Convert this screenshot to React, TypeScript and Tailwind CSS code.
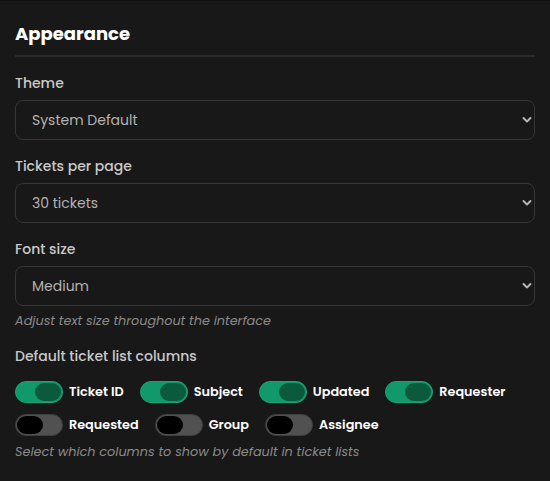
import { useState } from "react"

const font = { fontFamily: "Poppins, 'Open Sans', sans-serif" }

function Chevron() {
  return (
    <svg width="10" height="7" viewBox="0 0 10 7" className="pointer-events-none absolute right-[3px] top-1/2 -translate-y-1/2">
      <path d="M1.5 1.5 L5 5 L8.5 1.5" fill="none" stroke="#b5b5b5" strokeWidth="2" strokeLinecap="round" strokeLinejoin="round" />
    </svg>
  )
}

function Field({ label, value, options, hint }: { label: string; value: string; options: string[]; hint?: string }) {
  return (
    <div className="mt-4">
      <label className="block text-[14px] leading-5 font-medium text-[#c9c9c9] mb-[7px]">{label}</label>
      <div className="relative">
        <select
          defaultValue={value}
          style={font}
          className="w-full h-10 appearance-none rounded-lg border border-[#363636] bg-[#181818] pl-4 pr-8 text-[14px] text-[#b3b3b3] outline-none"
        >
          {options.map((o) => (
            <option key={o}>{o}</option>
          ))}
        </select>
        <Chevron />
      </div>
      {hint && <p className="mt-[6px] text-[12.8px] leading-[18px] italic text-[#8a8a8a]">{hint}</p>}
    </div>
  )
}

function Toggle({ label, initial }: { label: string; initial: boolean }) {
  const [on, setOn] = useState(initial)
  return (
    <button type="button" onClick={() => setOn(!on)} className="flex items-center gap-[6px]">
      <span
        className={
          "flex h-[22px] w-[48px] items-center rounded-full border p-[1px] " +
          (on ? "justify-end bg-[#11986b] border-[#15a676]" : "justify-start bg-[#515151] border-[#3e3e3e]")
        }
      >
        <span className={"h-[18px] w-[26px] rounded-full " + (on ? "bg-[#0b5a3e]" : "bg-black")} />
      </span>
      <span className="text-[12.8px] leading-5 font-semibold text-white">{label}</span>
    </button>
  )
}

export default function App() {
  return (
    <div style={font} className="min-h-screen bg-[#181818] border-t border-[#0e0e0e] px-[15px]">
      <h2 className="pt-[19px] pb-[7px] border-b-2 border-[#2b2b2b] text-[18px] leading-7 font-bold text-white">Appearance</h2>

      <Field label="Theme" value="System Default" options={["System Default", "Light", "Dark"]} />
      <Field label="Tickets per page" value="30 tickets" options={["10 tickets", "20 tickets", "30 tickets", "50 tickets"]} />
      <Field
        label="Font size"
        value="Medium"
        options={["Small", "Medium", "Large"]}
        hint="Adjust text size throughout the interface"
      />

      <div className="mt-4">
        <div className="text-[14px] leading-5 font-medium text-[#c9c9c9]">Default ticket list columns</div>
        <div className="mt-[15px] flex flex-col gap-[11px]">
          <div className="flex items-center gap-x-4">
            <Toggle label="Ticket ID" initial={true} />
            <Toggle label="Subject" initial={true} />
            <Toggle label="Updated" initial={true} />
            <Toggle label="Requester" initial={true} />
          </div>
          <div className="flex items-center gap-x-4">
            <Toggle label="Requested" initial={false} />
            <Toggle label="Group" initial={false} />
            <Toggle label="Assignee" initial={false} />
          </div>
        </div>
        <p className="mt-[7px] text-[12.8px] leading-[18px] italic text-[#8a8a8a]">
          Select which columns to show by default in ticket lists
        </p>
      </div>
    </div>
  )
}
